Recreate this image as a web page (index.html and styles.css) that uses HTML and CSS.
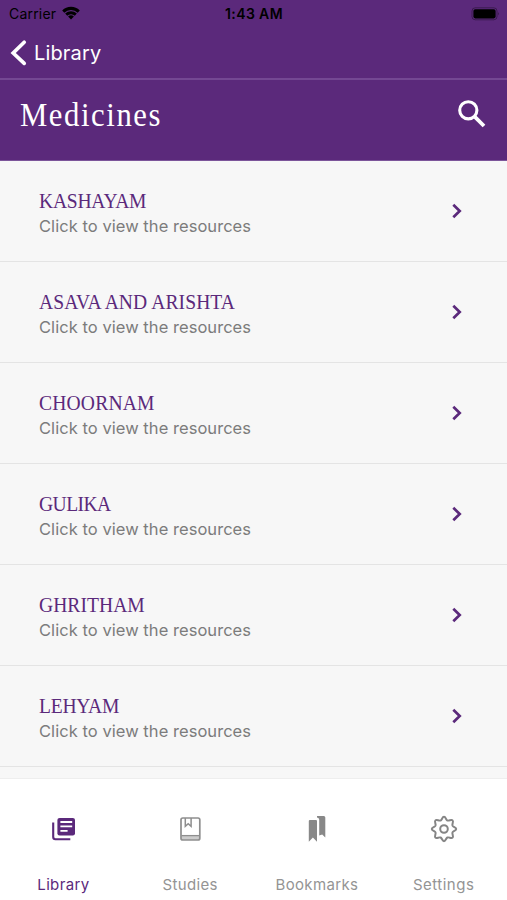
FILE: index.html
```html
<!DOCTYPE html>
<html lang="en">
<head>
    <meta charset="UTF-8">
    <meta name="viewport" content="width=device-width, initial-scale=1.0">
    <title>Medicines</title>
    <link rel="stylesheet" href="styles.css">
</head>
<body>
    <div class="app">
        <!-- Status bar -->
        <div class="status-bar">
            <div class="carrier">
                <span>Carrier</span>
                <svg width="18" height="14" viewBox="0 0 18 14">
                    <path d="M0.2 4.5 A12.4 12.4 0 0 1 17.8 4.5 L15.7 6.7 A9.5 9.5 0 0 0 2.3 6.7 Z"/>
                    <path d="M3.2 7.6 A8.2 8.2 0 0 1 14.8 7.6 L12.8 9.7 A5.4 5.4 0 0 0 5.2 9.7 Z"/>
                    <path d="M6.1 10.6 A4.1 4.1 0 0 1 11.9 10.6 L9 13.6 Z"/>
                </svg>
            </div>
            <span class="clock">1:43 AM</span>
            <div class="battery">
                <svg width="30" height="14" viewBox="0 0 30 14">
                    <rect x="1" y="0.8" width="25" height="12" rx="3.2" fill="none" stroke="#000" stroke-opacity="0.35"/>
                    <rect x="2.4" y="2.2" width="22.2" height="9.2" rx="1.8"/>
                    <path d="M27.2 5 Q29 6.8 27.2 8.6 Z" fill-opacity="0.4"/>
                </svg>
            </div>
        </div>

        <!-- Back navigation -->
        <nav class="nav-bar">
            <a href="#" class="back-link">
                <svg width="17" height="28" viewBox="0 0 17 28">
                    <path d="M14.2 3.2 L3.2 14 L14.2 24.4" fill="none" stroke="#fff" stroke-width="3.7" stroke-linecap="round"/>
                </svg>
                <span>Library</span>
            </a>
        </nav>

        <header class="page-header">
            <h1>Medicines</h1>
            <svg class="search" width="28" height="28" viewBox="0 0 28 28">
                <circle cx="10.3" cy="10.3" r="8.6" fill="none" stroke="#fff" stroke-width="3.1"/>
                <path d="M16.4 16.4 L26 26" fill="none" stroke="#fff" stroke-width="3.8"/>
            </svg>
        </header>

        <!-- Medicine list -->
        <ul class="list">
            <li class="row">
                <div>
                    <h2 class="kashayam">KASHAYAM</h2>
                    <p>Click to view the resources</p>
                </div>
                <svg class="chevron" width="10" height="16" viewBox="0 0 10 16"><path d="M1.3 1.8 L7.7 8 L1.3 14.2"/></svg>
            </li>
            <li class="row">
                <div>
                    <h2 class="asava">ASAVA AND ARISHTA</h2>
                    <p>Click to view the resources</p>
                </div>
                <svg class="chevron" width="10" height="16" viewBox="0 0 10 16"><path d="M1.3 1.8 L7.7 8 L1.3 14.2"/></svg>
            </li>
            <li class="row">
                <div>
                    <h2 class="choornam">CHOORNAM</h2>
                    <p>Click to view the resources</p>
                </div>
                <svg class="chevron" width="10" height="16" viewBox="0 0 10 16"><path d="M1.3 1.8 L7.7 8 L1.3 14.2"/></svg>
            </li>
            <li class="row">
                <div>
                    <h2 class="gulika">GULIKA</h2>
                    <p>Click to view the resources</p>
                </div>
                <svg class="chevron" width="10" height="16" viewBox="0 0 10 16"><path d="M1.3 1.8 L7.7 8 L1.3 14.2"/></svg>
            </li>
            <li class="row">
                <div>
                    <h2 class="ghritham">GHRITHAM</h2>
                    <p>Click to view the resources</p>
                </div>
                <svg class="chevron" width="10" height="16" viewBox="0 0 10 16"><path d="M1.3 1.8 L7.7 8 L1.3 14.2"/></svg>
            </li>
            <li class="row">
                <div>
                    <h2 class="lehyam">LEHYAM</h2>
                    <p>Click to view the resources</p>
                </div>
                <svg class="chevron" width="10" height="16" viewBox="0 0 10 16"><path d="M1.3 1.8 L7.7 8 L1.3 14.2"/></svg>
            </li>
        </ul>

        <!-- Bottom tabs -->
        <nav class="tab-bar">
            <a href="#" class="tab active">
                <svg width="28" height="28" viewBox="0 0 28 28">
                    <path d="M4.2 7.5 V22 Q4.2 24.2 6.4 24.2 H21.3" fill="none" stroke="#5b297b" stroke-width="2.1"/>
                    <rect x="8.4" y="2.9" width="17.6" height="17.6" rx="2.2" fill="#5b297b"/>
                    <path d="M11.4 7 H23.2 M11.4 11.4 H23.2 M11.4 15.8 H18.6" stroke="#fff" stroke-width="1.8"/>
                </svg>
                <span>Library</span>
            </a>
            <a href="#" class="tab">
                <svg width="28" height="28" viewBox="0 0 28 28">
                    <rect x="5.3" y="21" width="18" height="4" fill="#ccc"/>
                    <rect x="5" y="3" width="18.8" height="22" rx="1.8" fill="none" stroke="#8e8e8e" stroke-width="1.7"/>
                    <path d="M5.3 20.6 H23.5" stroke="#8e8e8e" stroke-width="1.3"/>
                    <path d="M9.3 3 V11.4 L12.2 8.8 L15.1 11.4 V3" fill="none" stroke="#8e8e8e" stroke-width="1.5"/>
                </svg>
                <span>Studies</span>
            </a>
            <a href="#" class="tab">
                <svg width="28" height="28" viewBox="0 0 28 28">
                    <path d="M5.8 6 Q5.8 4.9 6.9 4.9 H13 Q14 4.9 14 6 V26.8 L9.9 22.6 L5.8 26.8 Z" fill="#888"/>
                    <path d="M14 1 H20.8 Q22.3 1 22.3 2.5 V22.6 L19.2 19.6 L16.2 20.6 V4.6 Q16.2 2.6 14 2.4 Z" fill="#888"/>
                </svg>
                <span>Bookmarks</span>
            </a>
            <a href="#" class="tab settings">
                <svg width="28" height="28" viewBox="0 0 28 28" fill="none" stroke="#858585" stroke-width="2" stroke-linejoin="round">
                    <path d="M14 1.8 C15.8 1.8 15.9 4.8 17.4 5.5 C19 6.2 21.4 4.1 22.6 5.4 C23.9 6.6 21.8 9 22.5 10.6 C23.2 12.1 26.2 12.2 26.2 14 C26.2 15.8 23.2 15.9 22.5 17.4 C21.8 19 23.9 21.4 22.6 22.6 C21.4 23.9 19 21.8 17.4 22.5 C15.9 23.2 15.8 26.2 14 26.2 C12.2 26.2 12.1 23.2 10.6 22.5 C9 21.8 6.6 23.9 5.4 22.6 C4.1 21.4 6.2 19 5.5 17.4 C4.8 15.9 1.8 15.8 1.8 14 C1.8 12.2 4.8 12.1 5.5 10.6 C6.2 9 4.1 6.6 5.4 5.4 C6.6 4.1 9 6.2 10.6 5.5 C12.1 4.8 12.2 1.8 14 1.8 Z"/>
                    <circle cx="14" cy="14" r="3.8"/>
                </svg>
                <span>Settings</span>
            </a>
        </nav>
    </div>
</body>
</html>
```
FILE: styles.css
```css
* {
    box-sizing: border-box;
    margin: 0;
    padding: 0;
}

body {
    font-family: 'Inter', 'Liberation Sans', sans-serif;
    background-color: #f7f7f7;
}

.app {
    display: flex;
    flex-direction: column;
    height: 900px;
    overflow: hidden;
}

svg {
    display: block;
}

a {
    text-decoration: none;
}

/* Status bar */
.status-bar {
    display: grid;
    grid-template-columns: 1fr auto 1fr;
    align-items: center;
    height: 27px;
    padding: 0 6px 0 9px;
    background-color: #5b297b;
    color: #000;
    font-size: 14px;
}

.carrier {
    display: flex;
    align-items: center;
    gap: 6px;
    letter-spacing: 0.2px;
}

.carrier svg {
    margin-bottom: 2px;
}

.clock {
    padding-right: 2px;
    font-weight: 600;
    letter-spacing: 0.4px;
}

.battery {
    justify-self: end;
}

/* Back navigation */
.nav-bar {
    display: flex;
    align-items: center;
    height: 53px;
    padding-left: 10px;
    background-color: #5b297b;
    border-bottom: 2px solid #744893;
}

.back-link {
    display: flex;
    align-items: center;
    gap: 7px;
    color: #fff;
    font-size: 20px;
    letter-spacing: 0.15px;
}

.page-header {
    display: flex;
    justify-content: space-between;
    height: 81px;
    padding: 16px 21px 0 20px;
    background-color: #5b297b;
    border-bottom: 1px solid #7c559a;
}

h1 {
    color: #fff;
    font-family: 'Liberation Serif', serif;
    font-size: 33px;
    font-weight: normal;
    line-height: 38px;
    letter-spacing: 1.7px;
    transform: scaleX(0.93);
    transform-origin: left;
}

.search {
    margin-top: 4px;
}

/* List */
.list {
    flex: 1;
    list-style: none;
}

.row {
    display: flex;
    justify-content: space-between;
    align-items: center;
    height: 101px;
    padding: 4px 45px 0 39px;
    border-bottom: 1px solid #e4e4e4;
}

/* condensed capitals */
h2 {
    color: #5b297b;
    font-family: 'Liberation Serif', serif;
    font-size: 21.5px;
    font-weight: normal;
    line-height: 26px;
    white-space: nowrap;
    transform: scaleX(0.91);
    transform-origin: left;
}

.kashayam {
    letter-spacing: -0.25px;
}

.asava {
    letter-spacing: 0.1px;
}

.choornam {
    letter-spacing: 0.2px;
}

.gulika {
    letter-spacing: -0.6px;
}

.ghritham {
    letter-spacing: 0.05px;
}

.lehyam {
    letter-spacing: -0.25px;
}

.row p {
    color: #7c7c7c;
    font-size: 16.5px;
    line-height: 25px;
    letter-spacing: 0.05px;
}

.chevron {
    margin-bottom: 4px;
}

.chevron path {
    fill: none;
    stroke: #5b297b;
    stroke-width: 2.7;
}

/* Bottom tabs */
.tab-bar {
    display: grid;
    grid-template-columns: repeat(4, 1fr);
    height: 122px;
    background-color: #fff;
    border-top: 1px solid #eee;
}

.tab {
    display: flex;
    flex-direction: column;
    align-items: center;
    gap: 31px;
    padding-top: 36px;
    color: #949494;
    font-size: 15px;
    line-height: 22px;
    letter-spacing: 0.35px;
}

.settings {
    letter-spacing: 0.5px;
}

.tab.active {
    color: #5b297b;
}
```
